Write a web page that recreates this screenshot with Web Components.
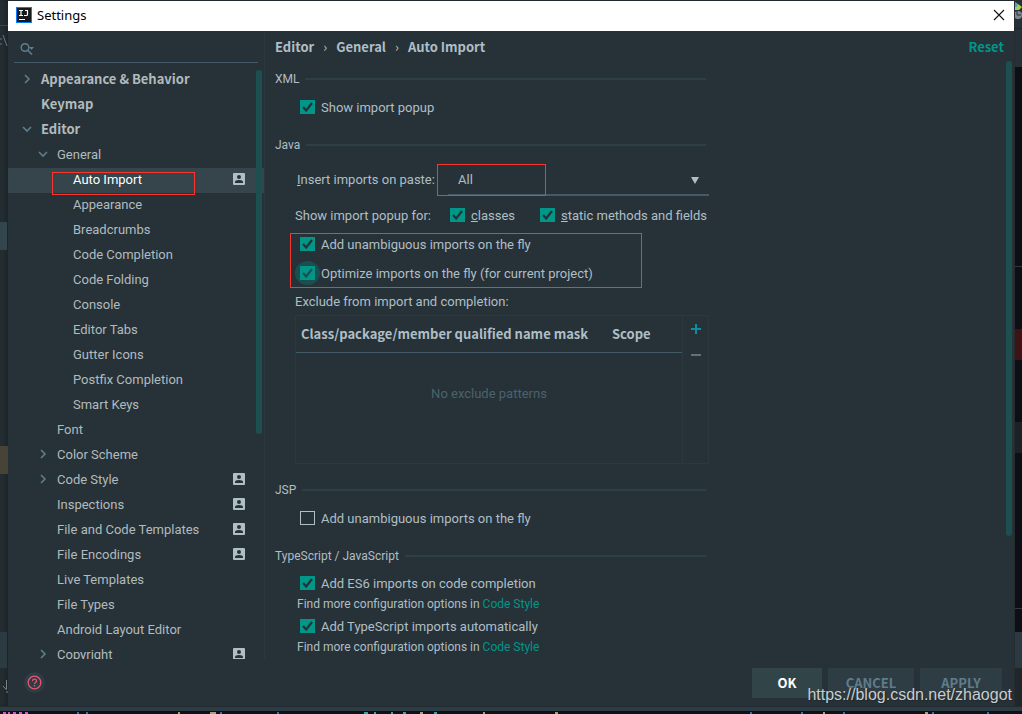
<!DOCTYPE html>
<html lang="en">
<head>
<meta charset="utf-8">
<title>Settings</title>
<style>
  html, body { margin: 0; height: 100%; overflow: hidden; }
  body {
    background: #263238; color: #b0bec5;
    font: 13px/20px Roboto, "Noto Sans", sans-serif;
    --bg: #263238; --fg: #b0bec5; --accent: #009688; --rule: #2f3f47; --line: #425b67;
    --thumb: #1d4f50; --note: #f9372f; --strong: "Noto Sans CJK SC", "Noto Sans", sans-serif;
  }
</style>
</head>
<body>
<ide-desktop>
  <settings-window caption="Settings">
    <settings-sidebar slot="side"></settings-sidebar>
    <settings-page slot="page">
      <crumb-bar slot="head"></crumb-bar>
      <option-group heading="XML">
        <check-row checked>Show import popup</check-row>
      </option-group>
      <option-group heading="Java">
        <paste-row></paste-row>
        <popup-row></popup-row>
        <marked-rows>
          <check-row checked>Add unambiguous imports on the fly</check-row>
          <check-row checked halo>Optimize imports on the fly (for current project)</check-row>
        </marked-rows>
        <exclude-table></exclude-table>
      </option-group>
      <option-group heading="JSP">
        <check-row>Add unambiguous imports on the fly</check-row>
      </option-group>
      <option-group heading="TypeScript / JavaScript">
        <check-row checked compact>Add ES6 imports on code completion</check-row>
        <hint-row></hint-row>
        <check-row checked compact>Add TypeScript imports automatically</check-row>
        <hint-row></hint-row>
      </option-group>
    </settings-page>
    <dialog-buttons slot="foot"></dialog-buttons>
  </settings-window>
</ide-desktop>

<script>
const define = (name, html, setup) => customElements.define(name, class extends HTMLElement {
  constructor() {
    super();
    const t = document.createElement('template');
    t.innerHTML = '<style>:host{display:block}*{box-sizing:border-box}</style>' + html;
    this.attachShadow({ mode: 'open' }).append(t.content.cloneNode(true));
  }
  connectedCallback() { if (setup) setup(this, this.shadowRoot); }
});

/* Editor window behind the dialog: slivers at the sides and bottom. */
define('ide-desktop', `
<style>
  :host { display: grid; grid-template: 1px minmax(0,1fr) 8px / 8px minmax(0,1fr) 8px; height: 100vh; background: #20292e; position: relative; overflow: hidden; }
  .left, .right { grid-row: 1 / 3; position: relative; overflow: hidden; }
  .left { grid-column: 1; background: #252e33; box-shadow: inset -3px 0 4px #1c2428; }
  .right { grid-column: 3; background: #0c0f16; border-left: 1px solid #262b2e; }
  svg { display: block; }
  ::slotted(*) { grid-area: 2 / 2; }
  .bottom { grid-area: 3 / 1 / 4 / 4; background: linear-gradient(#222b30 0 1px, #2d3c42 1px 5px, #0e1017 5px); overflow: hidden; }
  .url { position: absolute; right: 10px; bottom: 8px; font: 16px/22px "Liberation Sans", sans-serif; color: #c9cdcf; text-shadow: 1px 1px 1px #20282c; }
</style>
<div class="left"><svg width="8" height="706" aria-hidden="true">
  <path d="M0 25.500h8" stroke="#35434a"/><path d="M0 39h2M0 44h2M3 35l4 11" stroke="#66767d" fill="none"/>
  <path fill="#34464d" d="M0 222h7v28H0z"/><path fill="#484337" d="M0 446h8v28H0z"/><path fill="#2c3b42" d="M0 632h7v36H0z"/>
  <path d="M6.500 680v9M3 686l3.500 4M6 692h2" stroke="#78868b" fill="none"/></svg></div>
<slot></slot>
<div class="right"><svg width="8" height="706" aria-hidden="true">
  <path fill="#263137" d="M0 0h8v67H0z"/><path fill="#1c2529" d="M0 28h8v1H0z"/>
  <path fill="#a9cf4f" d="M0 3l3 1 4 3-3 3H0z"/><path fill="#4aa3bf" d="M0 2l3 2-1 3H0z"/>
  <circle cx="3" cy="15" r="4" fill="#7c898e"/><path d="M2 11v4h4" stroke="#263137" fill="none"/>
  <path fill="#3f1316" d="M0 329h8v31H0z"/><path fill="#1a2225" d="M0 422h8v31H0z"/>
  <path fill="#343839" d="M0 266h8v1H0zM0 608h8v1H0z"/><path fill="#2b3a42" d="M0 632h8v36H0z"/><path fill="#20272b" d="M0 668h8v38H0z"/></svg></div>
<div class="bottom"><svg width="1022" height="8" aria-hidden="true">
  <path d="M3 7h3m2 0h2m3 0h3m3 0h3m3 0h3" stroke="#d94fd9" stroke-width="2"/>
  <path d="M77 7h2m7 0h2m132 0h2m55 0h2m471 0h2m49 0h2m40 0h2m87 0h2m53 0h2" stroke="#396eb5" stroke-width="2"/>
  <path d="M210 7h6m-38 0h2m240 0h3m60 0h2m70 0h3m265 0h2m100 0h3" stroke="#b59b75" stroke-width="2"/>
  <path d="M364 7h4m6 0h2m15 0h2m10 0h3m28 0h3" stroke="#35a7a9" stroke-width="2"/></svg></div>
<div class="url">https://blog.csdn.net/zhaogot</div>`);

/* Dialog frame: title bar, two panes, footer. */
define('settings-window', `
<style>
  :host { display: grid; grid-template: 30px minmax(0,1fr) 47px / 257px minmax(0,1fr); background: var(--bg); min-height: 0; }
  header { grid-column: 1 / 3; background: #fff; color: #000; display: flex; align-items: center; gap: 5px; padding: 0 9px 2px 8px; }
  header svg { display: block; }
  h1 { font: 13px/20px "Noto Sans", sans-serif; margin: 0; flex: 1; }
  button { border: 0; padding: 0; background: none; }
  slot[name=foot] { display: block; grid-column: 1 / 3; }
  ::slotted(*) { min-height: 0; }
</style>
<header>
  <svg width="16" height="16" viewBox="0 0 16 16" aria-hidden="true"><path fill="#087cfa" d="M0 0h16v16H0z"/><path fill="#17191c" d="M1 1h14v14H1z"/><path d="M3 3.500h4M5 3.500v5M3 8.500h4M9 3.500h2.500v4q0 1-1 1H8" stroke="#fff" fill="none" stroke-width="1.200"/><path fill="#fff" d="M3 12h6v1H3z"/></svg>
  <h1></h1>
  <button aria-label="Close"><svg width="12" height="12" viewBox="0 0 12 12"><path d="M1 1l10 10M11 1L1 11" stroke="#111" stroke-width="1.100"/></svg></button>
</header>
<slot name="side"></slot><slot name="page"></slot><slot name="foot"></slot>`,
(el, r) => { r.querySelector('h1').textContent = el.getAttribute('caption'); });

define('settings-sidebar', `
<style>
  :host { display: flex; flex-direction: column; position: relative; border-right: 1px solid #2b383f; overflow: hidden; }
  label { display: flex; align-items: center; margin: 0 6px 5px; height: 32px; padding: 5px 0 0 6px; border-bottom: 1px solid var(--line); }
  input { flex: 1; min-width: 0; border: 0; background: none; color: inherit; font: inherit; outline: 0; }
  nav { flex: 1; min-height: 0; overflow: hidden; }
  .thumb { position: absolute; right: 2px; top: 39px; width: 6px; height: 364px; border-radius: 3px; background: var(--thumb); }
</style>
<label><svg width="16" height="14" viewBox="0 0 16 14" aria-hidden="true"><circle cx="5" cy="5.500" r="3.800" stroke="#607d8b" stroke-width="1.500" fill="none"/><path d="M8 8.500l4 4" stroke="#607d8b" stroke-width="1.700"/><path d="M9 5h5l-2.500 3z" fill="#607d8b"/></svg><input aria-label="Search settings"></label>
<nav aria-label="Settings categories"></nav><div class="thumb"></div>`,
(el, r) => {
  const rows = [
    ['Appearance & Behavior', 0, 'closed'], ['Keymap', 0], ['Editor', 0, 'open'], ['General', 1, 'open'],
    ['Auto Import', 2, '', 'person', 'selected'], ['Appearance', 2], ['Breadcrumbs', 2], ['Code Completion', 2],
    ['Code Folding', 2], ['Console', 2], ['Editor Tabs', 2], ['Gutter Icons', 2], ['Postfix Completion', 2],
    ['Smart Keys', 2], ['Font', 1], ['Color Scheme', 1, 'closed'], ['Code Style', 1, 'closed', 'person'],
    ['Inspections', 1, '', 'person'], ['File and Code Templates', 1, '', 'person'], ['File Encodings', 1, '', 'person'],
    ['Live Templates', 1], ['File Types', 1], ['Android Layout Editor', 1], ['Copyright', 1, 'closed', 'person']
  ];
  const nav = r.querySelector('nav');
  for (const [name, level, state, person, selected] of rows) {
    const n = document.createElement('tree-row');
    n.textContent = name;
    n.setAttribute('level', level);
    if (state) n.setAttribute(state, '');
    if (person) n.setAttribute('person', '');
    if (selected) n.setAttribute('selected', '');
    nav.append(n);
  }
});

define('tree-row', `
<style>
  :host { height: 25px; position: relative; color: #b2babd; }
  :host([selected]) { background: #35454b; color: #fff; }
  a { display: flex; align-items: center; height: 22px; padding: 0 19px 0 14px; color: inherit; text-decoration: none; }
  :host([level="1"]) a { padding-left: 30px; }
  :host([level="2"]) a { padding-left: 46px; }
  span { flex: 1; padding: 2px 0 0 9px; white-space: nowrap; }
  :host([level="0"]) span { font-family: var(--strong); font-weight: 700; padding-top: 0; }
  svg { display: block; }
  .arrow { width: 10px; height: 10px; fill: none; stroke: #607d8b; stroke-width: 1.600; }
  .arrow path, .person { display: none; }
  :host([open]) .o, :host([closed]) .c, :host([person]) .person { display: block; }
  .mark { display: none; position: absolute; left: 44px; top: 4px; width: 143px; height: 23px; border: 1px solid var(--note); z-index: 1; pointer-events: none; }
  :host([selected]) .mark { display: block; }
</style>
<a href="#"><svg class="arrow" viewBox="0 0 10 10" aria-hidden="true"><path class="o" d="M1 3l4 4 4-4"/><path class="c" d="M3 1l4 4-4 4"/></svg>
<span><slot></slot></span>
<svg class="person" width="12" height="12" viewBox="0 0 12 12" aria-hidden="true"><rect width="12" height="12" rx="1" fill="#b0bec5"/><circle cx="6" cy="4" r="2" fill="#263238"/><path d="M2 10V9q0-2 4-2t4 2v1z" fill="#263238"/></svg></a><div class="mark"></div>`);

define('settings-page', `
<style>
  :host { position: relative; padding: 0 10px; overflow: hidden; }
  .body { max-width: 434px; }
  .thumb { position: absolute; right: 2px; top: 30px; width: 6px; height: 475px; border-radius: 3px; background: var(--thumb); }
</style>
<slot name="head"></slot><div class="body"><slot></slot></div><div class="thumb"></div>`);

define('crumb-bar', `
<style>
  :host { display: flex; height: 33px; align-items: center; font-family: var(--strong); font-weight: 700; padding-bottom: 1px; box-sizing: border-box; }
  ol { display: flex; list-style: none; margin: 0; padding: 0; flex: 1; }
  li + li::before { content: "›"; padding: 0 9px; font-weight: 400; }
  a { color: var(--accent); text-decoration: none; }
</style>
<ol><li>Editor</li><li>General</li><li>Auto Import</li></ol><a href="#">Reset</a>`);

define('option-group', `
<style>
  :host { margin-bottom: 8px; }
  section { display: block; }
  h2 { display: flex; align-items: center; gap: 6px; margin: 0; height: 29px; padding: 0 3px 0 0; font-size: 12px; font-weight: 400; line-height: 20px; }
  h2::after { content: ""; flex: 1; height: 2px; background: var(--rule); }
  .in { padding-left: 20px; }
</style>
<section><h2></h2><div class="in"><slot></slot></div></section>`,
(el, r) => { r.querySelector('h2').textContent = el.getAttribute('heading'); });

/* A tick box with its label. */
define('check-row', `
<style>
  :host { height: 29px; padding-left: 5px; }
  :host([compact]) { height: 26px; }
  :host([inline]) { padding: 0; }
  label { display: flex; align-items: center; gap: 6px; height: 28px; line-height: 20px; white-space: nowrap; }
  :host([compact]) label { height: 26px; }
  span { padding-top: 2px; }
  input { appearance: none; margin: 0; width: 15px; height: 14px; border: 1px solid var(--fg); position: relative; }
  input:checked { border: 0; background: var(--accent) url('data:image/svg+xml,<svg xmlns="http://www.w3.org/2000/svg" viewBox="0 0 15 14"><path d="M3 7l3.200 3.500L12 3" fill="none" stroke="%23263238" stroke-width="2.200"/></svg>'); }
  :host([halo]) input::before { content: ""; position: absolute; inset: -5px; border-radius: 50%; background: #009688; opacity: .3; }
</style>
<label><input type="checkbox"><span><slot></slot></span></label>`,
(el, r) => { r.querySelector('input').checked = el.hasAttribute('checked'); });

define('paste-row', `
<style>
  :host { display: flex; height: 32px; margin: 5px 0; padding-left: 2px; position: relative; }
  label { line-height: 32px; width: 151px; white-space: nowrap; }
  .box { flex: 1; position: relative; }
  select { appearance: none; width: 100%; height: 32px; border: 0; border-bottom: 2px solid var(--line); border-radius: 0; background: none; color: inherit; font: inherit; padding: 2px 10px 0; outline: 0; }
  svg { position: absolute; right: 10px; top: 13px; }
  .mark { position: absolute; left: 142px; top: 0; width: 109px; height: 32px; border: 1px solid var(--note); pointer-events: none; }
</style>
<label for="paste"><u>I</u>nsert imports on paste:</label>
<div class="box"><select id="paste"><option>All</option></select><svg width="8" height="7" aria-hidden="true"><path fill="#b0bec5" d="M0 0h8L4 7z"/></svg></div><div class="mark"></div>`);

define('popup-row', `
<style>:host { display: flex; height: 29px; line-height: 30px; white-space: nowrap; } .a { margin: 0 25px 0 19px; }</style>
<span>Show import popup for:</span><check-row class="a" inline checked><u>c</u>lasses</check-row><check-row inline checked><u>s</u>tatic methods and fields</check-row>`);

define('marked-rows', `
<style>:host { position: relative; } .mark { position: absolute; left: -5px; top: 3px; width: 352px; height: 55px; border: 1px solid var(--note); pointer-events: none; }</style>
<slot></slot><div class="mark"></div>`);

define('exclude-table', `
<style>
  :host { padding-bottom: 3px; }
  p { margin: 0; line-height: 27px; }
  .frame { display: flex; height: 149px; border: 1px solid #2b383f; }
  .pane { flex: 1; }
  table { width: 100%; border-collapse: collapse; table-layout: fixed; }
  th { height: 36px; padding: 0 5px; text-align: left; font-family: var(--strong); border-bottom: 1px solid var(--line); white-space: nowrap; }
  th:last-child { width: 75px; }
  td { height: 84px; padding: 0; text-align: center; color: #4b626d; }
  .tools { width: 26px; border-left: 1px solid #2b383f; display: flex; flex-direction: column; align-items: center; }
  button { border: 0; background: none; padding: 0; width: 25px; height: 26px; display: grid; place-items: center; }
</style>
<p id="cap">Exclude from import and completion:</p>
<div class="frame"><div class="pane"><table aria-labelledby="cap"><thead><tr><th>Class/package/member qualified name mask</th><th>Scope</th></tr></thead><tbody><tr><td colspan="2">No exclude patterns</td></tr></tbody></table></div>
<div class="tools"><button aria-label="Add"><svg width="10" height="10"><path d="M5 0v10M0 5h10" stroke="#0b8f9c" stroke-width="2"/></svg></button><button aria-label="Remove"><svg width="10" height="10"><path d="M0 5h10" stroke="#66706f" stroke-width="2"/></svg></button></div></div>`);

define('hint-row', `
<style>:host { padding-left: 2px; font-size: 12px; line-height: 17px; } a { color: var(--accent); text-decoration: none; }</style>
Find more configuration options in <a href="#">Code Style</a>`);

define('dialog-buttons', `
<style>
  :host { display: flex; gap: 6px; padding: 9px 12px 0 16px; }
  button { border: 0; padding: 0; height: 30px; background: #2e3c43; color: #607d8b; font: 700 13px/20px var(--strong); }
  .help { width: 21px; height: 21px; border-radius: 50%; margin: 4px auto 0 0; display: grid; place-items: center; }
  .ok { width: 70px; background: #314549; color: #fff; } .cancel { width: 86px; } .apply { width: 82px; }
</style>
<button class="help" aria-label="Help"><svg width="15" height="15" viewBox="0 0 15 15"><circle cx="7.500" cy="7.500" r="6.300" fill="none" stroke="#ef5371" stroke-width="1.300"/><path d="M5.500 6.200q0-2 2-2t2 1.800q0 .9-1 1.500t-1 1.500" fill="none" stroke="#ef5371" stroke-width="1.300"/><path fill="#ef5371" d="M6.800 10h1.400v1.400H6.800z"/></svg></button>
<button class="ok">OK</button><button class="cancel">CANCEL</button><button class="apply">APPLY</button>`);
</script>
</body>
</html>
